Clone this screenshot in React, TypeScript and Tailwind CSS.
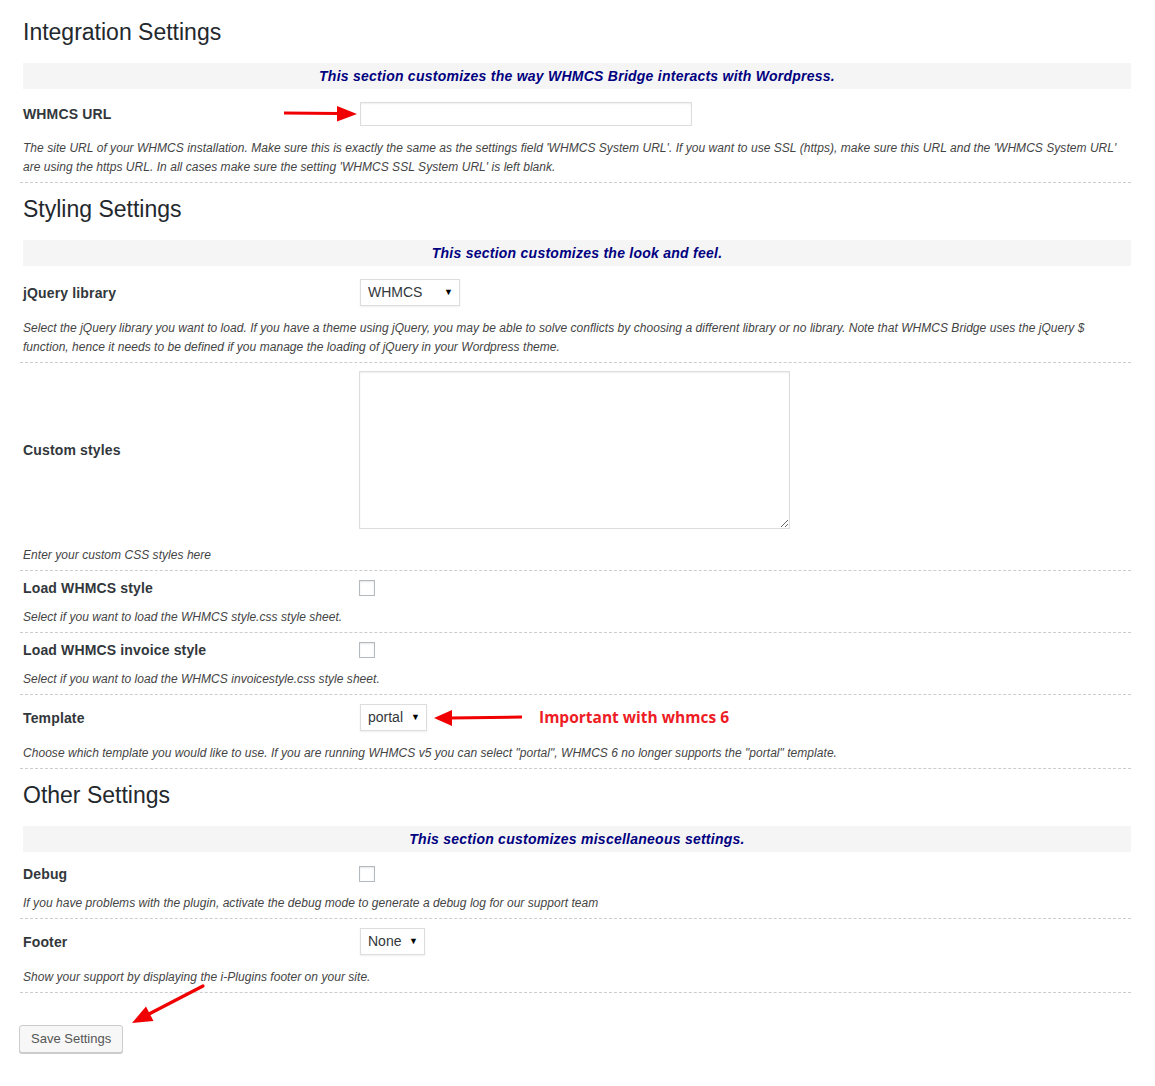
import React from 'react';

const font = { fontFamily: '"Liberation Sans", Arial, sans-serif' };

function Heading({ children }: { children: React.ReactNode }) {
  return <h2 className="pl-[3px] text-[23px] leading-[30px] text-[#23282d] font-normal">{children}</h2>;
}

function Banner({ children }: { children: React.ReactNode }) {
  return (
    <div className="ml-[3px] mt-[16px] mb-[4px] h-[26px] flex items-center justify-center bg-[#f5f5f5] text-[14px] tracking-[0.25px] font-bold italic text-[#000080]">
      {children}
    </div>
  );
}

function FakeSelect({ value, width }: { value: string; width: string }) {
  return (
    <div className={`${width} h-[27px] flex items-center justify-between pl-[7px] pr-[6px] border border-[#dddddd] bg-white text-[14px] text-[#32373c] shadow-[0_1px_2px_rgba(0,0,0,0.07)]`}>
      <span>{value}</span>
      <span className="text-[9px] text-black">▼</span>
    </div>
  );
}

function Checkbox() {
  return <div className="w-4 h-4 border border-[#b4b9be] bg-white shadow-[inset_0_1px_2px_rgba(0,0,0,0.1)]" />;
}

function Field({
  label,
  control,
  desc,
  rowPad = 'pt-[9px] pb-[13px]',
  extra,
}: {
  label: string;
  control: React.ReactNode;
  desc: React.ReactNode;
  rowPad?: string;
  extra?: React.ReactNode;
}) {
  return (
    <div className="border-b border-dashed border-[#cccccc]">
      <div className={`relative flex items-center ${rowPad}`}>
        <div className="w-[340px] shrink-0 pl-[3px] text-[14px] leading-4 tracking-[0.15px] font-bold text-[#32373c]">{label}</div>
        {control}
        {extra}
      </div>
      <p className="pl-[3px] pb-[5px] text-[12px] leading-[19px] tracking-[0.04px] italic text-[#444444]">{desc}</p>
    </div>
  );
}

export default function App() {
  return (
    <div className="bg-white min-h-[1086px]" style={font}>
      <div className="ml-[20px] w-[1111px] pt-[17px]">
        <Heading>Integration Settings</Heading>
        <Banner>This section customizes the way WHMCS Bridge interacts with Wordpress.</Banner>
        <Field
          label="WHMCS URL"
          control={
            <div className="w-[332px] h-[24px] border border-[#dddddd] bg-white shadow-[inset_0_1px_2px_rgba(0,0,0,0.07)]" />
          }
          extra={
            <svg className="absolute left-[264px] top-[11px]" width="76" height="20" viewBox="284 103 76 20">
              <polygon points="284,110.5 339,111 339,114 284,113.5" fill="#f00000" />
              <polygon points="337,105 357,113 337,120.5" fill="#f00000" />
            </svg>
          }
          desc={
            <>
              The site URL of your WHMCS installation. Make sure this is exactly the same as the settings field 'WHMCS System URL'. If you want to use SSL (https), make sure this URL and the 'WHMCS System URL'
              <br />
              are using the https URL. In all cases make sure the setting 'WHMCS SSL System URL' is left blank.
            </>
          }
        />

        <div className="mt-[11px]">
          <Heading>Styling Settings</Heading>
        </div>
        <Banner>This section customizes the look and feel.</Banner>
        <Field
          label="jQuery library"
          control={<FakeSelect value="WHMCS" width="w-[100px]" />}
          desc={
            <>
              Select the jQuery library you want to load. If you have a theme using jQuery, you may be able to solve conflicts by choosing a different library or no library. Note that WHMCS Bridge uses the jQuery $
              <br />
              function, hence it needs to be defined if you manage the loading of jQuery in your Wordpress theme.
            </>
          }
        />
        <Field
          label="Custom styles"
          rowPad="pt-[8px] pb-[17px]"
          control={
            <textarea className="-ml-[1px] w-[431px] h-[158px] border border-[#dddddd] bg-white shadow-[inset_0_1px_2px_rgba(0,0,0,0.07)] block" />
          }
          desc="Enter your custom CSS styles here"
        />
        <Field
          label="Load WHMCS style"
          rowPad="pt-[9px] pb-[12px]"
          control={<div className="-ml-[1px]"><Checkbox /></div>}
          desc="Select if you want to load the WHMCS style.css style sheet."
        />
        <Field
          label="Load WHMCS invoice style"
          rowPad="pt-[9px] pb-[12px]"
          control={<div className="-ml-[1px]"><Checkbox /></div>}
          desc="Select if you want to load the WHMCS invoicestyle.css style sheet."
        />
        <Field
          label="Template"
          control={<FakeSelect value="portal" width="w-[67px]" />}
          extra={
            <div className="flex items-center">
              <svg className="ml-[6px]" width="90" height="18" viewBox="432 704 90 18">
                <polygon points="433,713 451,705 451,721" fill="#f00000" />
                <polygon points="449,711.5 521,710.5 521,713.5 449,714.5" fill="#f00000" />
              </svg>
              <span
                className="ml-[16px] text-[15.5px] font-bold text-[#ee1c25]"
                style={{ fontFamily: '"Open Sans", "Liberation Sans", sans-serif' }}
              >
                Important with whmcs 6
              </span>
            </div>
          }
          desc={`Choose which template you would like to use. If you are running WHMCS v5 you can select "portal", WHMCS 6 no longer supports the "portal" template.`}
        />

        <div className="mt-[11px]">
          <Heading>Other Settings</Heading>
        </div>
        <Banner>This section customizes miscellaneous settings.</Banner>
        <Field
          label="Debug"
          rowPad="pt-[10px] pb-[12px]"
          control={<div className="-ml-[1px]"><Checkbox /></div>}
          desc="If you have problems with the plugin, activate the debug mode to generate a debug log for our support team"
        />
        <Field
          label="Footer"
          control={<FakeSelect value="None" width="w-[65px]" />}
          desc="Show your support by displaying the i-Plugins footer on your site."
        />

        <div className="relative pt-[32px]">
          <svg className="absolute left-[100px] top-[-12px]" width="90" height="50" viewBox="120 980 90 50">
            <line x1="203" y1="985" x2="148" y2="1013.5" stroke="#f00000" strokeWidth="3.2" strokeLinecap="round" />
            <polygon points="132,1022 146,1005.5 153.5,1020" fill="#f00000" />
          </svg>
          <button className="-ml-[1px] h-[28px] px-[11px] border border-[#cccccc] rounded-[3px] bg-[#f7f7f7] text-[13px] text-[#555555] shadow-[0_1px_0_#cccccc]">
            Save Settings
          </button>
        </div>
      </div>
    </div>
  );
}
